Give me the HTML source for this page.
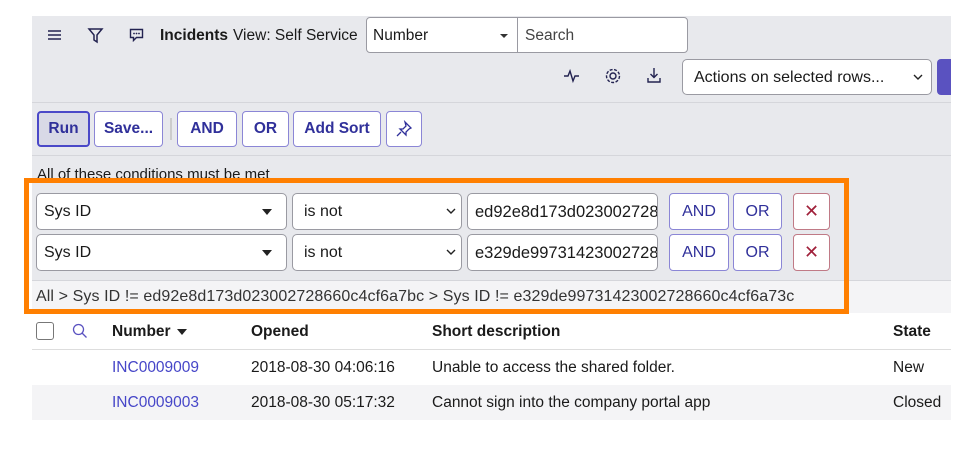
<!DOCTYPE html>
<html><head><style>
*{box-sizing:border-box;margin:0;padding:0}
body{width:980px;height:449px;background:#fff;font-family:"Liberation Sans",sans-serif;color:#1a1a1a;position:relative;overflow:hidden}
.abs{position:absolute}
.panel{left:32px;top:16px;width:919px;height:264px;background:#e8e9ed}
.sep{height:1px;background:#d5d6db;left:32px;width:919px}
.box{border:1px solid #9a9aa2;background:#fff;border-radius:5px}
.btn{position:absolute;border:1px solid #8b86d6;background:#fff;border-radius:4px;color:#30309a;font-size:15.5px;text-align:center;font-weight:bold;}
.t{position:absolute;font-size:15.5px;white-space:nowrap}
.x{border-color:#c07a86;color:#a0203a;font-weight:normal;font-size:18px}
</style></head><body>
<div class="abs panel"></div>
<div class="abs sep" style="top:102px"></div>
<div class="abs sep" style="top:155px"></div>
<svg class="abs" style="left:47px;top:28px" width="16" height="14"><path d="M1 3h13M1 7h13M1 11h13" stroke="#222250" stroke-width="1.6"/></svg>
<svg class="abs" style="left:87px;top:27px" width="18" height="18"><path d="M2 2h13l-5 6v7l-3-2V8z" fill="none" stroke="#222250" stroke-width="1.5"/></svg>
<svg class="abs" style="left:129px;top:28px" width="16" height="14"><path d="M1.5 1.5h12v8h-6l-3 3v-3h-3z" fill="none" stroke="#222250" stroke-width="1.4"/><circle cx="5" cy="5.5" r=".9" fill="#222250"/><circle cx="7.5" cy="5.5" r=".9" fill="#222250"/><circle cx="10" cy="5.5" r=".9" fill="#222250"/></svg>
<div class="t" style="left:160px;top:27px;font-weight:bold">Incidents</div>
<div class="t" style="left:233px;top:27px">View: Self Service</div>
<div class="abs box" style="left:366px;top:17px;width:152px;height:36px;border-radius:4px 0 0 4px"></div>
<div class="t" style="left:373px;top:27px">Number</div>
<div class="abs" style="left:500px;top:34px;border:4px solid transparent;border-top:4px solid #333"></div>
<div class="abs box" style="left:517px;top:17px;width:171px;height:36px;border-radius:0 4px 4px 0"></div>
<div class="t" style="left:525px;top:27px;color:#444">Search</div>
<svg class="abs" style="left:563px;top:68px" width="18" height="16"><path d="M1 8h4l2-5 3 10 2-5h4" fill="none" stroke="#222250" stroke-width="1.4"/></svg>
<svg class="abs" style="left:604px;top:67px" width="18" height="18"><circle cx="9" cy="9" r="3" fill="none" stroke="#222250" stroke-width="1.4"/><circle cx="9" cy="9" r="6.5" fill="none" stroke="#222250" stroke-width="1.4" stroke-dasharray="3 1.5"/></svg>
<svg class="abs" style="left:646px;top:67px" width="16" height="18"><path d="M8 1v9M4.5 7l3.5 3.5 3.5-3.5M2 11v4h12v-4" fill="none" stroke="#222250" stroke-width="1.4"/></svg>
<div class="abs box" style="left:682px;top:59px;width:250px;height:36px"></div>
<div class="t" style="left:694px;top:69px;font-size:16px">Actions on selected rows...</div>
<svg class="abs" style="left:913px;top:73px" width="10" height="8"><path d="M1 2l4 4 4-4" fill="none" stroke="#222" stroke-width="1.4"/></svg>
<div class="abs" style="left:937px;top:59px;width:14px;height:36px;background:#5a52c0;border-radius:4px 0 0 4px"></div>
<div class="btn" style="left:37px;top:111px;width:53px;height:36px;background:#d8d9e6;border:2px solid #4a48c8;line-height:32px">Run</div>
<div class="btn" style="left:94px;top:111px;width:69px;height:36px;line-height:34px">Save...</div>
<div class="abs" style="left:170px;top:118px;width:2px;height:22px;background:#ccc"></div>
<div class="btn" style="left:177px;top:111px;width:60px;height:36px;line-height:34px">AND</div>
<div class="btn" style="left:242px;top:111px;width:47px;height:36px;line-height:34px">OR</div>
<div class="btn" style="left:293px;top:111px;width:88px;height:36px;line-height:34px">Add Sort</div>
<div class="btn" style="left:386px;top:111px;width:36px;height:36px"></div>
<svg class="abs" style="left:395px;top:120px" width="18" height="18"><path d="M10 2l6 6-2 1-3 3 0 3-6-6 3 0 3-3z M6 12l-4 4" fill="none" stroke="#30309a" stroke-width="1.3"/></svg>
<div class="t" style="left:37px;top:166px;font-size:15px">All of these conditions must be met</div>
<div class="abs" style="left:32px;top:280px;width:919px;height:33px;background:#f4f4f6;border-top:1px solid #d5d6db"></div>
<div class="abs box" style="left:36px;top:193px;width:251px;height:37px"></div>
<div class="t" style="left:44px;top:203px;font-size:16px">Sys ID</div>
<div class="abs" style="left:262px;top:209px;border:5px solid transparent;border-top:6px solid #222"></div>
<div class="abs box" style="left:292px;top:193px;width:170px;height:37px"></div>
<div class="t" style="left:304px;top:203px;font-size:16px">is not</div>
<svg class="abs" style="left:446px;top:207px" width="10" height="8"><path d="M1 2l4 4 4-4" fill="none" stroke="#222" stroke-width="1.4"/></svg>
<div class="abs box" style="left:467px;top:193px;width:191px;height:37px;overflow:hidden"><div class="t" style="left:7px;top:9px;font-size:16.5px">ed92e8d173d023002728</div></div>
<div class="btn" style="left:669px;top:193px;width:60px;height:37px;line-height:35px;font-weight:normal;font-size:16px">AND</div>
<div class="btn" style="left:733px;top:193px;width:49px;height:37px;line-height:35px;font-weight:normal;font-size:16px">OR</div>
<div class="btn x" style="left:793px;top:193px;width:37px;height:37px;line-height:34px">✕</div>
<div class="abs box" style="left:36px;top:234px;width:251px;height:37px"></div>
<div class="t" style="left:44px;top:244px;font-size:16px">Sys ID</div>
<div class="abs" style="left:262px;top:250px;border:5px solid transparent;border-top:6px solid #222"></div>
<div class="abs box" style="left:292px;top:234px;width:170px;height:37px"></div>
<div class="t" style="left:304px;top:244px;font-size:16px">is not</div>
<svg class="abs" style="left:446px;top:248px" width="10" height="8"><path d="M1 2l4 4 4-4" fill="none" stroke="#222" stroke-width="1.4"/></svg>
<div class="abs box" style="left:467px;top:234px;width:191px;height:37px;overflow:hidden"><div class="t" style="left:7px;top:9px;font-size:16.5px">e329de99731423002728</div></div>
<div class="btn" style="left:669px;top:234px;width:60px;height:37px;line-height:35px;font-weight:normal;font-size:16px">AND</div>
<div class="btn" style="left:733px;top:234px;width:49px;height:37px;line-height:35px;font-weight:normal;font-size:16px">OR</div>
<div class="btn x" style="left:793px;top:234px;width:37px;height:37px;line-height:34px">✕</div>
<div class="t" style="left:36px;top:288px;font-size:16px;color:#333;letter-spacing:0.1px">All &gt; Sys ID != ed92e8d173d023002728660c4cf6a7bc &gt; Sys ID != e329de99731423002728660c4cf6a73c</div>
<div class="abs" style="left:24px;top:178px;width:825px;height:136px;border:5px solid #ff7f00"></div>
<div class="abs" style="left:36px;top:322px;width:18px;height:18px;border:1px solid #777;border-radius:3px"></div>
<svg class="abs" style="left:72px;top:323px" width="16" height="16"><circle cx="6.5" cy="6.5" r="5" fill="none" stroke="#5a52c0" stroke-width="1.3"/><path d="M10 10l4.5 4.5" stroke="#5a52c0" stroke-width="1.3"/></svg>
<div class="t" style="left:112px;top:323px;font-weight:bold">Number</div>
<div class="abs" style="left:177px;top:329px;border:5px solid transparent;border-top:6px solid #222"></div>
<div class="t" style="left:251px;top:323px;font-weight:bold">Opened</div>
<div class="t" style="left:432px;top:323px;font-weight:bold">Short description</div>
<div class="t" style="left:893px;top:323px;font-weight:bold">State</div>
<div class="abs" style="left:32px;top:349px;width:919px;height:1px;background:#ddd"></div>
<div class="abs" style="left:32px;top:385px;width:919px;height:35px;background:#f4f4f6"></div>
<div class="t" style="left:112px;top:359px;color:#4646c8">INC0009009</div>
<div class="t" style="left:251px;top:359px">2018-08-30 04:06:16</div>
<div class="t" style="left:432px;top:359px">Unable to access the shared folder.</div>
<div class="t" style="left:893px;top:359px">New</div>
<div class="t" style="left:112px;top:394px;color:#4646c8">INC0009003</div>
<div class="t" style="left:251px;top:394px">2018-08-30 05:17:32</div>
<div class="t" style="left:432px;top:394px">Cannot sign into the company portal app</div>
<div class="t" style="left:893px;top:394px">Closed</div>
</body></html>
